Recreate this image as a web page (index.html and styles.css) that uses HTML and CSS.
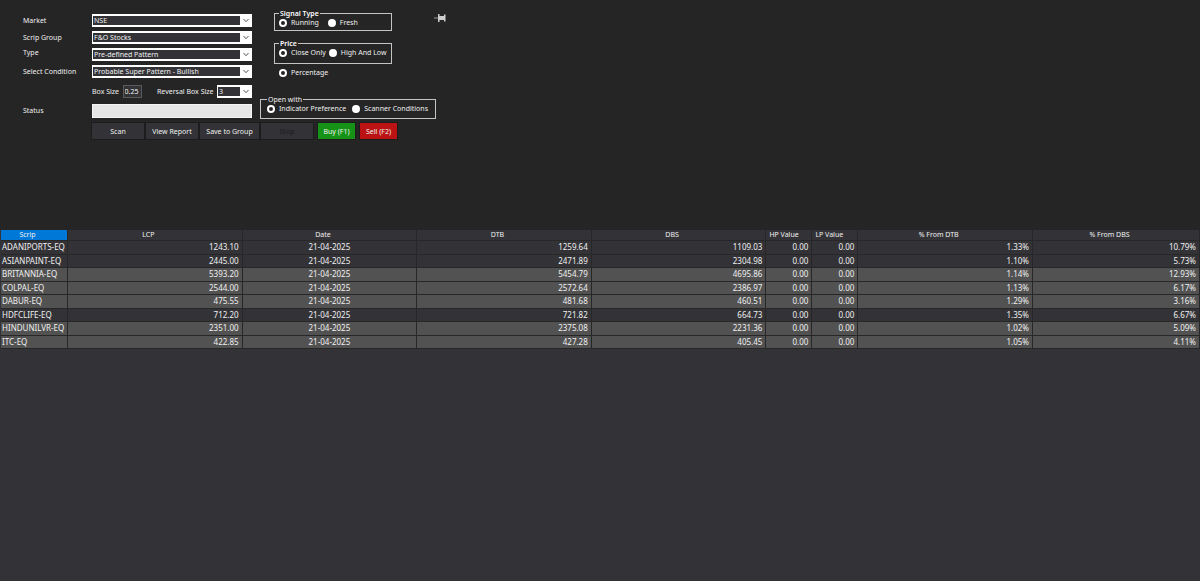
FILE: index.html
```html
<!DOCTYPE html>
<html lang="en">
<head>
    <meta charset="UTF-8">
    <meta name="viewport" content="width=device-width, initial-scale=1.0">
    <title>Pattern Scanner</title>
    <link rel="stylesheet" href="styles.css">
</head>
<body>
    <form class="scanner" onsubmit="return false">
        <div class="settings">
            <!-- scan criteria -->
            <div class="criteria">
                <label for="market">Market</label>
                <div class="combo">
                    <select id="market"><option>NSE</option></select>
                    <svg viewBox="0 0 12 9"><path d="M3.500 3 6 5.700 8.500 3"/></svg>
                </div>
                <label for="scripGroup">Scrip Group</label>
                <div class="combo">
                    <select id="scripGroup"><option>F&amp;O Stocks</option></select>
                    <svg viewBox="0 0 12 9"><path d="M3.500 3 6 5.700 8.500 3"/></svg>
                </div>
                <label for="type" class="label-top">Type</label>
                <div class="combo">
                    <select id="type"><option>Pre-defined Pattern</option></select>
                    <svg viewBox="0 0 12 9"><path d="M3.500 3 6 5.700 8.500 3"/></svg>
                </div>
                <label for="condition">Select Condition</label>
                <div class="combo">
                    <select id="condition"><option>Probable Super Pattern - Bullish</option></select>
                    <svg viewBox="0 0 12 9"><path d="M3.500 3 6 5.700 8.500 3"/></svg>
                </div>
                <div class="box-row">
                    <label for="boxSize">Box Size</label>
                    <input id="boxSize" class="box-size" type="text" value="0.25">
                    <label for="reversal" class="reversal-label">Reversal Box Size</label>
                    <div class="combo combo-small">
                        <select id="reversal"><option>3</option></select>
                        <svg viewBox="0 0 12 9"><path d="M3.500 3 6 5.700 8.500 3"/></svg>
                    </div>
                </div>
                <label for="status">Status</label>
                <input id="status" class="status" type="text" readonly>
            </div>

            <!-- signal options -->
            <div class="options">
                <fieldset class="group group-signal">
                    <legend class="strong">Signal Type</legend>
                    <label><input type="radio" name="signal" checked>Running</label>
                    <label><input type="radio" name="signal">Fresh</label>
                </fieldset>
                <fieldset class="group group-price">
                    <legend class="strong">Price</legend>
                    <label><input type="radio" name="price" checked>Close Only</label>
                    <label><input type="radio" name="price">High And Low</label>
                </fieldset>
                <label class="percentage"><input type="radio" name="percentage" checked>Percentage</label>
                <fieldset class="group group-open">
                    <legend>Open with</legend>
                    <label><input type="radio" name="openWith" checked>Indicator Preference</label>
                    <label><input type="radio" name="openWith">Scanner Conditions</label>
                </fieldset>
            </div>

            <button type="button" class="pin" aria-label="Pin panel">
                <svg viewBox="0 0 12 8">
                    <path d="M0 4h4" stroke="#9a9a9a" fill="none"/>
                    <path d="M4 0h1.500v2H10V.5h1.500v7H10V6H5.500v2H4z" fill="#cfcfcf"/>
                </svg>
            </button>
        </div>

        <div class="actions">
            <button class="btn">Scan</button>
            <button class="btn">View Report</button>
            <button class="btn btn-wide">Save to Group</button>
            <button class="btn" disabled>Stop</button>
            <button class="btn btn-buy">Buy (F1)</button>
            <button class="btn btn-sell">Sell (F2)</button>
        </div>
    </form>

    <div class="results-wrap">
        <table class="results">
            <colgroup>
                <col class="col-scrip"><col><col><col><col>
                <col class="col-value"><col class="col-value"><col><col class="col-last">
            </colgroup>
            <thead>
                <tr>
                    <th class="sorted">Scrip</th><th>LCP</th><th>Date</th><th>DTB</th><th>DBS</th>
                    <th class="left">HP Value</th><th class="left">LP Value</th><th>% From DTB</th><th>% From DBS</th>
                </tr>
            </thead>
            <tbody>
                <tr><td>ADANIPORTS-EQ</td><td>1243.10</td><td>21-04-2025</td><td>1259.64</td><td>1109.03</td><td>0.00</td><td>0.00</td><td>1.33%</td><td>10.79%</td></tr>
                <tr><td>ASIANPAINT-EQ</td><td>2445.00</td><td>21-04-2025</td><td>2471.89</td><td>2304.98</td><td>0.00</td><td>0.00</td><td>1.10%</td><td>5.73%</td></tr>
                <tr class="lit"><td>BRITANNIA-EQ</td><td>5393.20</td><td>21-04-2025</td><td>5454.79</td><td>4695.86</td><td>0.00</td><td>0.00</td><td>1.14%</td><td>12.93%</td></tr>
                <tr class="lit"><td>COLPAL-EQ</td><td>2544.00</td><td>21-04-2025</td><td>2572.64</td><td>2386.97</td><td>0.00</td><td>0.00</td><td>1.13%</td><td>6.17%</td></tr>
                <tr class="lit"><td>DABUR-EQ</td><td>475.55</td><td>21-04-2025</td><td>481.68</td><td>460.51</td><td>0.00</td><td>0.00</td><td>1.29%</td><td>3.16%</td></tr>
                <tr><td>HDFCLIFE-EQ</td><td>712.20</td><td>21-04-2025</td><td>721.82</td><td>664.73</td><td>0.00</td><td>0.00</td><td>1.35%</td><td>6.67%</td></tr>
                <tr class="lit"><td>HINDUNILVR-EQ</td><td>2351.00</td><td>21-04-2025</td><td>2375.08</td><td>2231.36</td><td>0.00</td><td>0.00</td><td>1.02%</td><td>5.09%</td></tr>
                <tr class="lit"><td>ITC-EQ</td><td>422.85</td><td>21-04-2025</td><td>427.28</td><td>405.45</td><td>0.00</td><td>0.00</td><td>1.05%</td><td>4.11%</td></tr>
            </tbody>
        </table>
    </div>
</body>
</html>
```
FILE: styles.css
```css
*{
    box-sizing: border-box;
}

body{
    margin: 0;
    background-color: #333337;
    color: #f0f0f0;
    font-family: "Noto Sans", "Open Sans", sans-serif;
    font-size: 7px;
    line-height: 9px;
}

input, select, button{
    margin: 0;
    font: inherit;
    color: inherit;
}

.scanner{
    min-height: 230px;
    padding: 14px 0 0 23px;
    background-color: #252525;
}

.settings{
    display: flex;
    align-items: flex-start;
}

/* left column */
.criteria{
    display: grid;
    grid-template-columns: 69px 160px;
    row-gap: 4px;
    align-items: center;
}

.criteria .label-top{
    align-self: start;
}

.combo{
    display: flex;
    height: 13px;
    padding: 2px 0 2px 1px;
    background-color: #fff;
}

.combo select{
    flex: 1;
    min-width: 0;
    padding: 0 1px;
    border: 0;
    border-radius: 0;
    appearance: none;
    background-color: #333337;
}

.combo svg{
    width: 12px;
    fill: none;
    stroke: #555;
}

.combo-small{
    width: 35px;
}

.box-row{
    grid-column: 2;
    display: flex;
    align-items: center;
    justify-content: space-between;
    padding-top: 3px;
}

.box-size{
    width: 19px;
    height: 13px;
    padding: 0 1px;
    border: 1px solid #5a5a5a;
    background-color: #333337;
}

.reversal-label{
    padding-left: 12px;
}

.status{
    width: 100%;
    height: 14px;
    margin-top: 2px;
    border: 1px solid #f4f4f4;
    background-color: #e6e6e6;
}

/* radio groups */
.options{
    display: flex;
    flex-direction: column;
    align-items: flex-start;
    padding-left: 8px;
}

.group{
    display: flex;
    align-items: center;
    min-width: 0;
    margin: 0;
    border: 1px solid #c4c4c4;
    padding: 0 4px;
}

.group legend{
    height: 9px;
    padding: 0 1px;
}

.strong{
    font-weight: 600;
    color: #fff;
}

.group-signal,
.group-price{
    width: 118px;
    margin-left: 14px;
}

.group-signal{
    height: 22px;
    margin-top: -5px;
}

.group-price{
    height: 25px;
    margin-top: 8px;
}

.group-open{
    width: 176px;
    height: 24px;
    margin-top: 18px;
    padding-left: 6px;
}

.options label{
    display: flex;
    align-items: center;
    gap: 4px;
    white-space: nowrap;
}

.group-signal label + label{
    margin-left: 9px;
}

.group-price label + label{
    margin-left: 3px;
}

.group-open label + label{
    margin-left: 6px;
}

.percentage{
    margin: 4px 0 0 19px;
}

input[type="radio"]{
    width: 8px;
    height: 8px;
    border: 2px solid #fff;
    border-radius: 50%;
    appearance: none;
    background-color: #fff;
}

input[type="radio"]:checked{
    background-color: #252525;
}

.pin{
    display: flex;
    margin-left: -2px;
    padding: 0;
    border: 0;
    background: none;
}

.pin svg{
    width: 12px;
    height: 8px;
}

/* buttons */
.actions{
    display: flex;
    gap: 2px;
    padding: 4px 0 0 69px;
}

.btn{
    width: 52px;
    height: 16px;
    padding: 0;
    border: 0;
    background-color: #333337;
    box-shadow: 0 0 0 1px #1c1c1c;
    white-space: nowrap;
}

.btn-wide{
    width: 59px;
}

.btn:disabled{
    color: #1c1c1c;
}

.btn-buy,
.btn-sell{
    width: 37px;
    margin-left: 3px;
}

.btn-buy{
    background-color: #169316;
}

.btn-sell{
    background-color: #bb1313;
}

/* scan results */
.results-wrap{
    padding-left: 1px;
}

.results{
    width: 100%;
    height: 119px;
    table-layout: fixed;
    border-collapse: separate;
    border-spacing: 0;
}

.col-scrip{
    width: 67px;
}

.col-value{
    width: 46px;
}

.col-last{
    width: 167px;
}

.results th,
.results td{
    padding: 0 3px;
    border-right: 1px solid #272728;
    border-bottom: 1px solid #272728;
    white-space: nowrap;
}

.results th{
    height: 11px;
    padding-right: 16px;
    font-weight: 400;
    line-height: 10px;
}

.results th.left{
    padding-right: 0;
    text-align: left;
}

.results th.sorted{
    background-color: #0078d7;
}

.results td{
    font-size: 8px;
    line-height: 12px;
    text-align: right;
}

.results td:first-child{
    padding-left: 1px;
    text-align: left;
}

.results td:nth-child(3){
    text-align: center;
}

.lit{
    background-color: #525252;
}
```
